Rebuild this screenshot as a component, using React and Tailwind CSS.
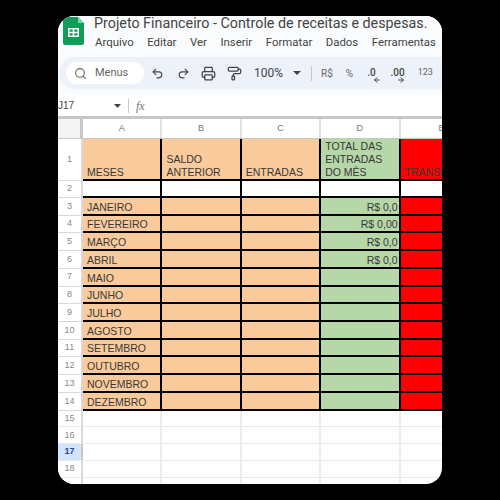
import { Search, Undo2, Redo2, Printer, PaintRoller, ArrowLeft, ArrowRight } from "lucide-react";

const months = ["JANEIRO", "FEVEREIRO", "MARÇO", "ABRIL", "MAIO", "JUNHO", "JULHO", "AGOSTO", "SETEMBRO", "OUTUBRO", "NOVEMBRO", "DEZEMBRO"];
const totals = ["R$ 0,0", "R$ 0,00", "R$ 0,0", "R$ 0,0"];
const menus = ["Arquivo", "Editar", "Ver", "Inserir", "Formatar", "Dados", "Ferramentas"];

const rowLabel = "w-[25px] shrink-0 bg-white border-r-2 border-b border-[#d9d9d9] flex items-center justify-center text-[9px] text-[#888]";
const cell = "w-[79.4px] shrink-0 border-r-2 border-b-2 border-black overflow-hidden whitespace-nowrap flex items-end pl-[4px] pr-[1px] text-[10.5px] leading-[13px] text-[#383838]";
const plain = "w-[79.4px] shrink-0 border-r-2 border-[#ececec]";

const SheetsLogo = () => (
  <svg width="21" height="28" viewBox="0 0 21 28">
    <path d="M2 0h13l6 6v20a2 2 0 0 1-2 2H2a2 2 0 0 1-2-2V2a2 2 0 0 1 2-2z" fill="#0f9d58" />
    <path d="M15 0l6 6h-6z" fill="#87ceac" />
    <path d="M5 11h11v9H5z" fill="#fff" />
    <path d="M6.5 12.5h3.2v2.2H6.5zM11.3 12.5h3.2v2.2h-3.2zM6.5 16.2h3.2v2.4H6.5zM11.3 16.2h3.2v2.4h-3.2z" fill="#0f9d58" />
  </svg>
);

const HeaderCell = ({ bg, children }) => (
  <div className={`${cell} ${bg}`}>
    <div className="whitespace-pre-line">{children}</div>
  </div>
);

const DataRow = ({ n, month, total }) => (
  <div className="flex h-[17.73px]">
    <div className={rowLabel}>{n}</div>
    <div className={`${cell} bg-[#f9cb9c] items-center`}>{month}</div>
    <div className={`${cell} bg-[#f9cb9c]`} />
    <div className={`${cell} bg-[#f9cb9c]`} />
    <div className={`${cell} bg-[#b6d7a8] items-center justify-end`}>{total}</div>
    <div className="flex-1 bg-[#ff0000] border-b-2 border-black" />
  </div>
);

const EmptyRow = ({ n, active }) => (
  <div className="flex h-[16.8px] border-b border-[#e8e8e8]">
    <div className={active ? "w-[25px] shrink-0 bg-[#d3e3fd] border-r-2 border-[#c7c7c7] flex items-center justify-center text-[9px] font-bold text-[#1c4a8a]" : rowLabel + " border-b-0"}>{n}</div>
    <div className={plain} />
    <div className={plain} />
    <div className={plain} />
    <div className={plain} />
    <div className="flex-1" />
  </div>
);

export default function App() {
  return (
    <div className="w-[500px] h-[500px] bg-black py-4 px-[58px] font-['Liberation_Sans',sans-serif]">
      <div className="h-[468px] rounded-2xl overflow-hidden bg-white flex flex-col">
        {/* Title + menus */}
        <div className="h-[41px] bg-[#f9fbfd] flex shrink-0 font-['Roboto',sans-serif]">
          <div className="w-[36px] pl-[5px] pt-[1px]"><SheetsLogo /></div>
          <div className="flex flex-col">
            <div className="text-[14.3px] leading-[14px] text-[#444] whitespace-nowrap">Projeto Financeiro - Controle de receitas e despesas.</div>
            <div className="flex gap-[13.5px] mt-[4px] pl-[1px] text-[11.4px] leading-[16px] text-[#444] whitespace-nowrap">
              {menus.map((m) => <span key={m}>{m}</span>)}
            </div>
          </div>
        </div>

        {/* Toolbar */}
        <div className="bg-[#f9fbfd] pb-[6px] pl-[1px] shrink-0">
          <div className="h-[32px] bg-[#edf2fa] rounded-l-full flex items-center text-[#444] font-['Roboto',sans-serif]">
            <div className="ml-[7px] w-[78px] h-[22px] bg-white rounded-full flex items-center gap-[8px] pl-[8px] text-[11px] text-[#666]">
              <Search size={13} strokeWidth={2} />
              <span>Menus</span>
            </div>
            <Undo2 size={13} className="ml-[7px]" />
            <Redo2 size={13} className="ml-[13px]" />
            <Printer size={15} className="ml-[11px]" />
            <PaintRoller size={15} className="ml-[11px]" />
            <span className="ml-[12px] text-[12px] w-[30px]">100%</span>
            <svg width="8" height="4" viewBox="0 0 8 4" className="ml-[9px]"><path d="M0 0h8L4 4z" fill="#444" /></svg>
            <div className="w-px h-[15px] bg-[#c7c7c7] ml-[10px]" />
            <span className="ml-[9px] text-[10px] text-[#666]">R$</span>
            <span className="ml-[13px] text-[10px] text-[#666]">%</span>
            <span className="ml-[14px] text-[10px] font-medium leading-[10px] relative">
              .0
              <ArrowLeft size={8} strokeWidth={3} className="absolute left-[6px] top-[8px]" />
            </span>
            <span className="ml-[15px] text-[10px] font-medium leading-[10px] relative">
              .00
              <ArrowRight size={8} strokeWidth={3} className="absolute left-[6px] top-[8px]" />
            </span>
            <span className="ml-[13px] text-[9px] text-[#666]">123</span>
          </div>
        </div>

        {/* Formula bar */}
        <div className="h-[24px] bg-white flex items-center shrink-0 border-b-[3px] border-[#c7c7c7] text-[#444]">
          <span className="text-[10px] w-[56px]">J17</span>
          <svg width="7" height="4" viewBox="0 0 7 4"><path d="M0 0h7L3.5 4z" fill="#444" /></svg>
          <div className="w-px h-[14px] bg-[#c7c7c7] ml-[7px]" />
          <span className="ml-[7px] text-[12px] italic font-['Liberation_Serif',serif] text-[#777]">fx</span>
        </div>

        {/* Column headers */}
        <div className="flex h-[20px] shrink-0 border-b border-[#c7c7c7] text-[9px] text-[#777]">
          <div className="w-[25px] shrink-0 bg-[#f4f4f4] border-r-[3px] border-[#c7c7c7]" />
          {["A", "B", "C", "D"].map((c) => (
            <div key={c} className="w-[79.4px] shrink-0 border-r-2 border-[#e0e0e0] flex items-center justify-center">{c}</div>
          ))}
          <div className="flex-1 overflow-hidden flex pl-[38px] items-center">E</div>
        </div>

        {/* Sheet body */}
        <div className="border-t-2 border-black ml-[25px] -mb-[2px]" />
        <div className="flex flex-col">
          <div className="flex h-[42px]">
            <div className={rowLabel}>1</div>
            <HeaderCell bg="bg-[#f9cb9c]">MESES</HeaderCell>
            <HeaderCell bg="bg-[#f9cb9c]">{"SALDO\nANTERIOR"}</HeaderCell>
            <HeaderCell bg="bg-[#f9cb9c]">ENTRADAS</HeaderCell>
            <HeaderCell bg="bg-[#b6d7a8]">{"TOTAL DAS\nENTRADAS\nDO MÊS"}</HeaderCell>
            <div className="flex-1 bg-[#ff0000] border-b-2 border-black overflow-hidden whitespace-nowrap flex items-end pl-[4px] text-[10.5px] leading-[13px] text-[#383838]">TRANSFERÊNCIAS</div>
          </div>
          <div className="flex h-[17px]">
            <div className={rowLabel}>2</div>
            <div className={cell} />
            <div className={cell} />
            <div className={cell} />
            <div className={cell} />
            <div className="flex-1 border-b-2 border-black" />
          </div>
          {months.map((month, i) => (
            <DataRow key={month} n={i + 3} month={month} total={totals[i]} />
          ))}
          <EmptyRow n={15} />
          <EmptyRow n={16} />
          <EmptyRow n={17} active />
          <EmptyRow n={18} />
          <EmptyRow n="" />
        </div>
      </div>
    </div>
  );
}
